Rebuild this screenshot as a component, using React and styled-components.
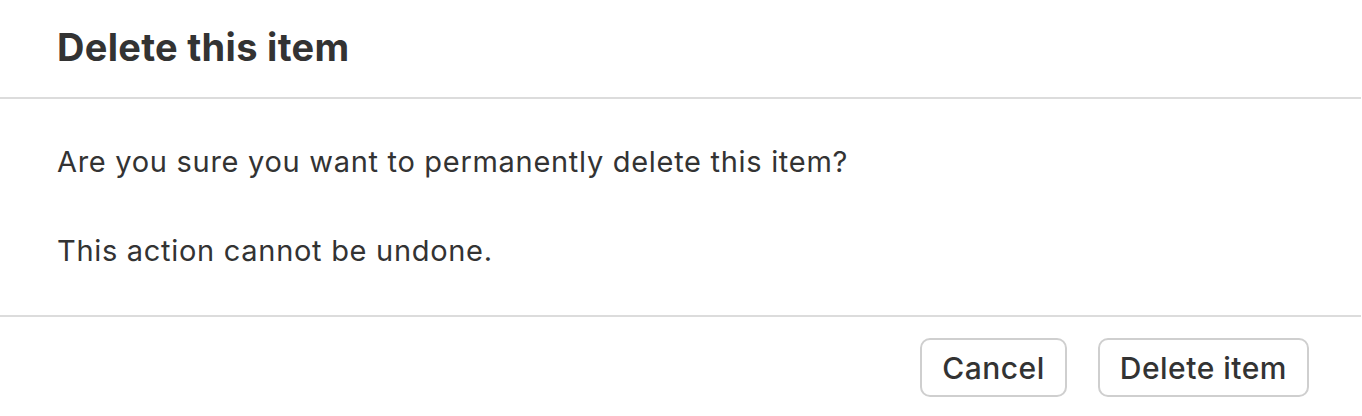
import styled, { createGlobalStyle } from 'styled-components'

const GlobalStyle = createGlobalStyle`
    html, body {
        margin: 0;
        padding: 0;
        background: #fff;
    }
    body {
        font-family: "Inter", "Liberation Sans", sans-serif;
        color: #333;
    }
`

//! Dialog sections.

const Dialog = styled.div`
    width: 1361px;
    height: 416px;
    display: flex;
    flex-direction: column;
    background: #fff;
`

//* Header

const Header = styled.div`
    display: flex;
    align-items: center;
    padding: 0 57px 4px;
    border-bottom: 2px solid #dcdcdc;
    box-sizing: border-box;
    height: 99px;
`

const Title = styled.h2`
    margin: 0;
    font-size: 38px;
    font-weight: 700;
    letter-spacing: 0.3px;
    color: #333;
`

//* Body

const Body = styled.div`
    padding: 42px 57px 0;
    height: 218px;
    box-sizing: border-box;
    border-bottom: 2px solid #dcdcdc;
    display: flex;
    flex-direction: column;
    gap: 47px;
`

const Text = styled.p`
    margin: 0;
    font-size: 29px;
    line-height: 42px;
    letter-spacing: 0.7px;
    color: #333;
`

//* Footer

const Footer = styled.div`
    flex: 1;
    display: flex;
    justify-content: flex-end;
    align-items: flex-start;
    gap: 31px;
    padding: 21px 52px 0 0;
`

const Button = styled.button`
    height: 59px;
    padding: 0 20px;
    border: 2px solid #cfcfcf;
    border-radius: 10px;
    background: #fff;
    font-family: inherit;
    font-size: 30px;
    font-weight: 500;
    letter-spacing: 0.5px;
    color: #333;
    cursor: pointer;
`

export default function App() {
    return (
        <>
            <GlobalStyle />
            <Dialog>
                <Header>
                    <Title>Delete this item</Title>
                </Header>
                <Body>
                    <Text>Are you sure you want to permanently delete this item?</Text>
                    <Text>This action cannot be undone.</Text>
                </Body>
                <Footer>
                    <Button>Cancel</Button>
                    <Button>Delete item</Button>
                </Footer>
            </Dialog>
        </>
    )
}
